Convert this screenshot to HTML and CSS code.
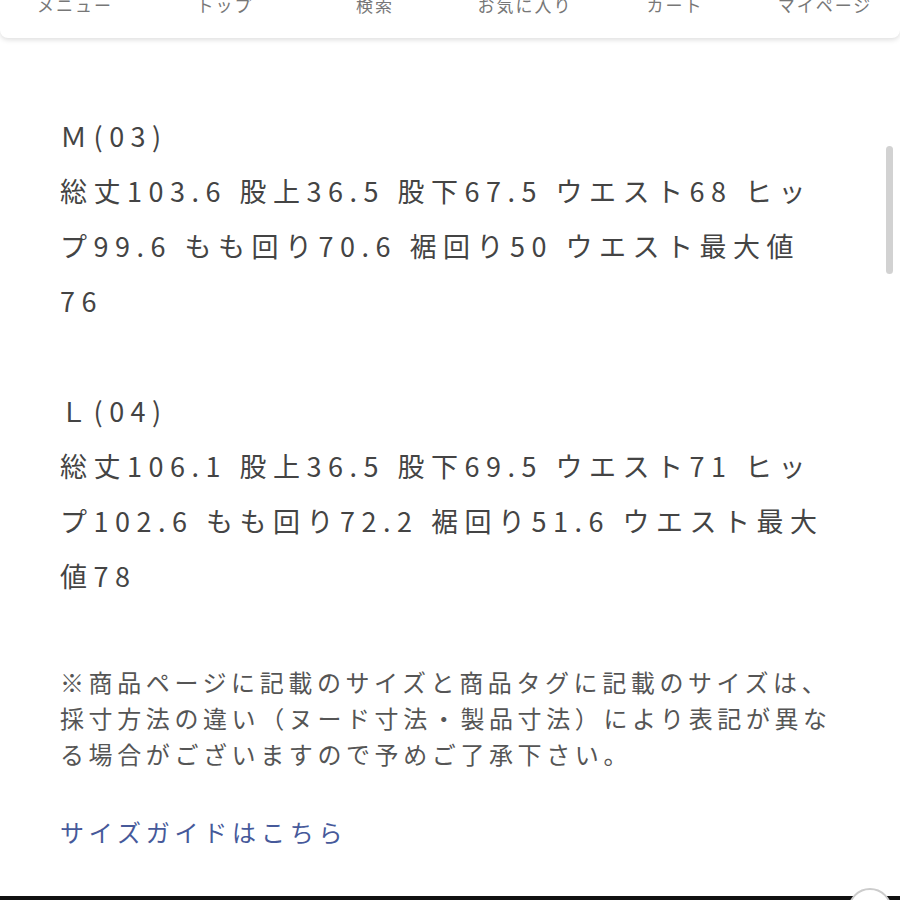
FILE: index.html
```html
<!DOCTYPE html>
<html lang="ja">
    <head>
        <meta charset="UTF-8">
        <title>サイズ</title>
        <link rel="stylesheet" href="styles.css">
    </head>
    <body>
        <div class="nav-bar">
            <div class="nav-item">メニュー</div>
            <div class="nav-item">トップ</div>
            <div class="nav-item">検索</div>
            <div class="nav-item">お気に入り</div>
            <div class="nav-item">カート</div>
            <div class="nav-item">マイページ</div>
        </div>
        <div class="page">
            <div class="size-text">
                <p>Ｍ(03)<br>総丈103.6 股上36.5 股下67.5 ウエスト68 ヒップ99.6 もも回り70.6 裾回り50 ウエスト最大値76</p>
                <p>Ｌ(04)<br>総丈106.1 股上36.5 股下69.5 ウエスト71 ヒップ102.6 もも回り72.2 裾回り51.6 ウエスト最大値78</p>
            </div>
            <p class="note-text">※商品ページに記載のサイズと商品タグに記載のサイズは、採寸方法の違い（ヌード寸法・製品寸法）により表記が異なる場合がございますので予めご了承下さい。</p>
            <a class="guide-link" href="#">サイズガイドはこちら</a>
            <div class="scroll-thumb"></div>
        </div>
        <div class="bottom-bar"></div>
        <div class="float-button"></div>
    </body>
</html>
```

FILE: styles.css
```css
*{
    padding: 0;
    margin: 0;
    box-sizing: border-box;
}
body {
    background-color: #fff;
    font-family: "Noto Sans CJK JP", "Noto Sans", sans-serif;
    color: #444;
    width: 900px;
    height: 900px;
    overflow: hidden;
    position: relative;
}
.nav-bar {
    display: flex;
    height: 38px;
    background: #fff;
    border-radius: 0 0 8px 8px;
    box-shadow: 0 2px 5px rgba(0, 0, 0, 0.13);
    overflow: hidden;
}
.nav-item {
    flex: 1;
    text-align: center;
    font-size: 17px;
    line-height: 20px;
    color: #777;
    letter-spacing: 2px;
    margin-top: -5px;
}
.page {
    position: relative;
    padding: 70px 70px 0 60px;
}
.size-text {
    font-size: 27px;
    line-height: 55px;
    letter-spacing: 6.5px;
}
.size-text p {
    margin-bottom: 55px;
}
.note-text {
    font-size: 24px;
    line-height: 36px;
    letter-spacing: 4.6px;
    color: #555;
    margin-top: 61px;
    margin-right: -20px;
}
.guide-link {
    display: block;
    margin-top: 42px;
    font-size: 24px;
    line-height: 36px;
    letter-spacing: 4.8px;
    color: #46599a;
    text-decoration: none;
}
.scroll-thumb {
    position: absolute;
    top: 108px;
    right: 7px;
    width: 7px;
    height: 128px;
    border-radius: 4px;
    background: #d2d2d2;
}
.bottom-bar {
    position: absolute;
    left: 0;
    bottom: 0;
    width: 900px;
    height: 4px;
    background: #111;
}
.float-button {
    position: absolute;
    left: 848px;
    top: 888px;
    width: 44px;
    height: 44px;
    border-radius: 50%;
    border: 2px solid #ccc;
    background: #fff;
}
```
